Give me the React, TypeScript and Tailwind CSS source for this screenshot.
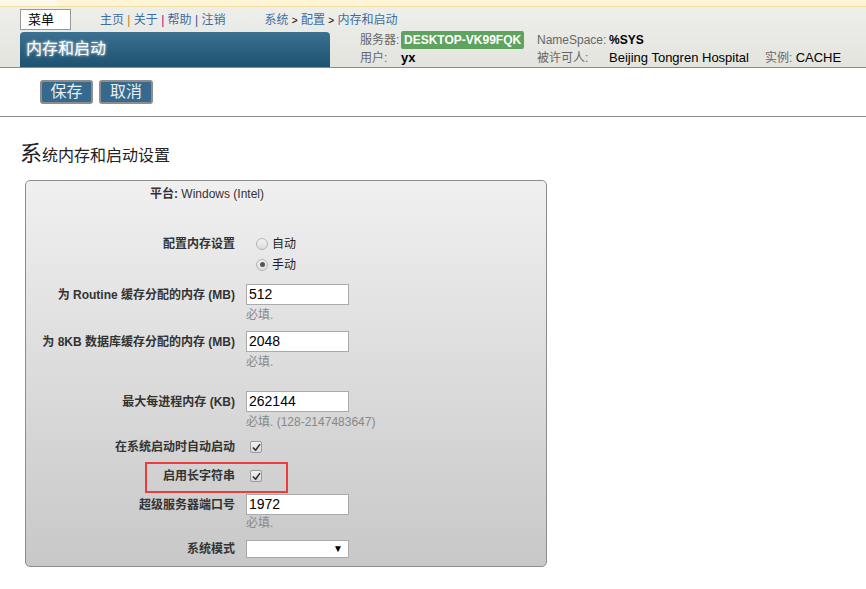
import type { ReactNode } from 'react'

const font = { fontFamily: '"Liberation Sans", Arial, "Noto Sans CJK SC", sans-serif' }

function Label({ children }: { children: ReactNode }) {
  return (
    <div className="w-[209px] shrink-0 text-right text-[12px] font-bold text-[#333]">{children}</div>
  )
}

function TextField({ value }: { value: string }) {
  return (
    <input
      readOnly
      defaultValue={value}
      className="block w-[103px] h-[21px] border border-[#aaa] bg-white px-[2px] text-[14px] text-black outline-none"
    />
  )
}

function Hint({ children }: { children: ReactNode }) {
  return <div className="pl-[220px] text-[12px] text-[#888] leading-[20px]">{children}</div>
}

function Check() {
  return (
    <div className="w-[12px] h-[12px] ml-[4px] rounded-[2px] border border-[#9a9a9a] bg-gradient-to-b from-[#f4f4f4] to-[#d8d8d8] flex items-center justify-center">
      <svg width="9" height="9" viewBox="0 0 10 10">
        <path d="M1.5 5.5 L4 8 L8.5 1.8" fill="none" stroke="#333" strokeWidth="1.8" strokeLinecap="round" strokeLinejoin="round" />
      </svg>
    </div>
  )
}

function Radio({ checked, label }: { checked?: boolean; label: string }) {
  return (
    <div className="flex items-center h-[21px] pl-[10px] gap-[4px]">
      <div className="w-[12px] h-[12px] rounded-full border border-[#b5b5b5] bg-gradient-to-b from-[#f2f2f2] to-[#dcdcdc] flex items-center justify-center">
        {checked && <div className="w-[5px] h-[5px] rounded-full bg-[#555]" />}
      </div>
      <span className="text-[12px] text-[#222]">{label}</span>
    </div>
  )
}

export default function App() {
  return (
    <div className="w-full min-h-screen bg-white" style={font}>
      {/* top strip */}
      <div className="flex h-[7px] border-b border-[#f4e0a0]">
        <div className="w-[57px] bg-[#fcf8ea]" />
        <div className="flex-1 bg-[#fdf5d6]" />
      </div>

      {/* header */}
      <div className="h-[61px] border-b border-[#8a8a8a] bg-gradient-to-b from-[#eeeeea] to-[#e4e4df] pl-[20px]">
        <div className="flex items-start h-[25px]">
          <div className="mt-[2px] w-[51px] h-[21px] border border-[#999] bg-white text-[13px] leading-[19px] pl-[7px] text-black">
            菜单
          </div>
          <div className="ml-[29px] mt-[5px] text-[12px] text-[#3b6ea5] leading-[16px] whitespace-nowrap">
            主页 <span className="text-[#c87a18]">|</span> 关于 <span className="text-[#8b1a7d]">|</span> 帮助{' '}
            <span className="text-[#3b4f9a]">|</span> 注销
          </div>
          <div className="ml-[39px] mt-[5px] text-[12px] text-[#3b6ea5] leading-[16px] whitespace-nowrap">
            系统 <span className="text-black text-[10px]">&gt;</span> 配置{' '}
            <span className="text-black text-[10px]">&gt;</span> 内存和启动
          </div>
        </div>
        <div className="flex h-[35px]">
          <div className="w-[310px] h-[35px] rounded-t-[4px] bg-gradient-to-b from-[#3b7191] to-[#1d5270] pl-[6px] text-[16px] leading-[33px] text-white [text-shadow:0_0_3px_#ffffff]">
            内存和启动
          </div>
          <div className="ml-[30px] -mt-[1px] grid grid-cols-[41px_136px_72px_156px_auto] grid-rows-[18px_18px] items-center whitespace-nowrap text-[13px]">
            <span className="text-[12px] text-[#666]">服务器:</span>
            <div className="flex">
              <span className="h-[18px] rounded-[2px] bg-[#5ea35e] px-[3px] text-[12px] font-bold leading-[18px] text-white">
                DESKTOP-VK99FQK
              </span>
            </div>
            <span className="text-[12px] text-[#666]">NameSpace:</span>
            <span className="col-span-2 text-[12px] font-bold text-black">%SYS</span>
            <span className="text-[12px] text-[#666]">用户:</span>
            <span className="font-bold text-black">yx</span>
            <span className="text-[12px] text-[#666]">被许可人:</span>
            <span className="text-black">Beijing Tongren Hospital</span>
            <span className="text-[12px] text-[#666]">
              实例: <span className="text-[13px] text-black">CACHE</span>
            </span>
          </div>
        </div>
      </div>

      {/* buttons */}
      <div className="flex gap-[6px] pl-[40px] pt-[12px] pb-[12px] border-b border-[#8a8a8a]">
        <button className="w-[53px] h-[24px] rounded-[3px] border-2 border-[#8d8d8d] bg-[#356a8e] text-[16px] leading-[18px] text-[#e8eef4]">
          保存
        </button>
        <button className="w-[54px] h-[24px] rounded-[3px] border-2 border-[#8d8d8d] bg-[#356a8e] text-[16px] leading-[18px] text-[#e8eef4]">
          取消
        </button>
      </div>

      {/* heading */}
      <div className="pl-[20px] pt-[25px] pb-[14px] h-[63px] flex items-baseline text-[#222]">
        <span className="text-[22px] leading-[24px]">系</span>
        <span className="text-[16px] leading-[24px]">统内存和启动设置</span>
      </div>

      {/* form */}
      <div className="ml-[25px] w-[522px] h-[387px] rounded-[5px] border border-[#8c8c8c] bg-gradient-to-b from-[#f0f0f0] to-[#c8c8c8]">
        <div className="mt-[1px] h-[24px] pl-[124px] text-[12px] leading-[24px] text-[#333]">
          <span className="font-bold">平台:</span> Windows (Intel)
        </div>

        <div className="mt-[27px] flex">
          <div className="h-[21px] flex items-center">
            <Label>配置内存设置</Label>
          </div>
          <div className="ml-[11px]">
            <Radio label="自动" />
            <Radio checked label="手动" />
          </div>
        </div>

        <div className="mt-[9px] flex items-center">
          <Label>为 Routine 缓存分配的内存 (MB)</Label>
          <div className="ml-[11px] flex">
            <TextField value="512" />
          </div>
        </div>
        <Hint>必填.</Hint>

        <div className="mt-[6px] flex items-center">
          <Label>为 8KB 数据库缓存分配的内存 (MB)</Label>
          <div className="ml-[11px] flex">
            <TextField value="2048" />
          </div>
        </div>
        <Hint>必填.</Hint>

        <div className="mt-[19px] flex items-center">
          <Label>最大每进程内存 (KB)</Label>
          <div className="ml-[11px] flex">
            <TextField value="262144" />
          </div>
        </div>
        <Hint>必填. (128-2147483647)</Hint>

        <div className="mt-[5px] h-[20px] flex items-center">
          <Label>在系统启动时自动启动</Label>
          <div className="ml-[11px]">
            <Check />
          </div>
        </div>

        <div className="relative mt-[9px] h-[20px] flex items-center">
          <Label>启用长字符串</Label>
          <div className="ml-[11px]">
            <Check />
          </div>
          <div className="absolute left-[119px] top-[-4px] w-[143px] h-[31px] border-2 border-[#ee3b3b]" />
        </div>

        <div className="mt-[8px] flex items-center">
          <Label>超级服务器端口号</Label>
          <div className="ml-[11px] flex">
            <TextField value="1972" />
          </div>
        </div>
        <div className="pl-[220px] text-[12px] text-[#888] leading-[17px]">必填.</div>

        <div className="mt-[8px] flex items-center">
          <Label>系统模式</Label>
          <div className="ml-[11px] w-[103px] h-[18px] border border-[#aaa] bg-white flex items-center justify-end pr-[5px]">
            <span className="text-[10px] leading-none text-black">▼</span>
          </div>
        </div>
      </div>
    </div>
  )
}
